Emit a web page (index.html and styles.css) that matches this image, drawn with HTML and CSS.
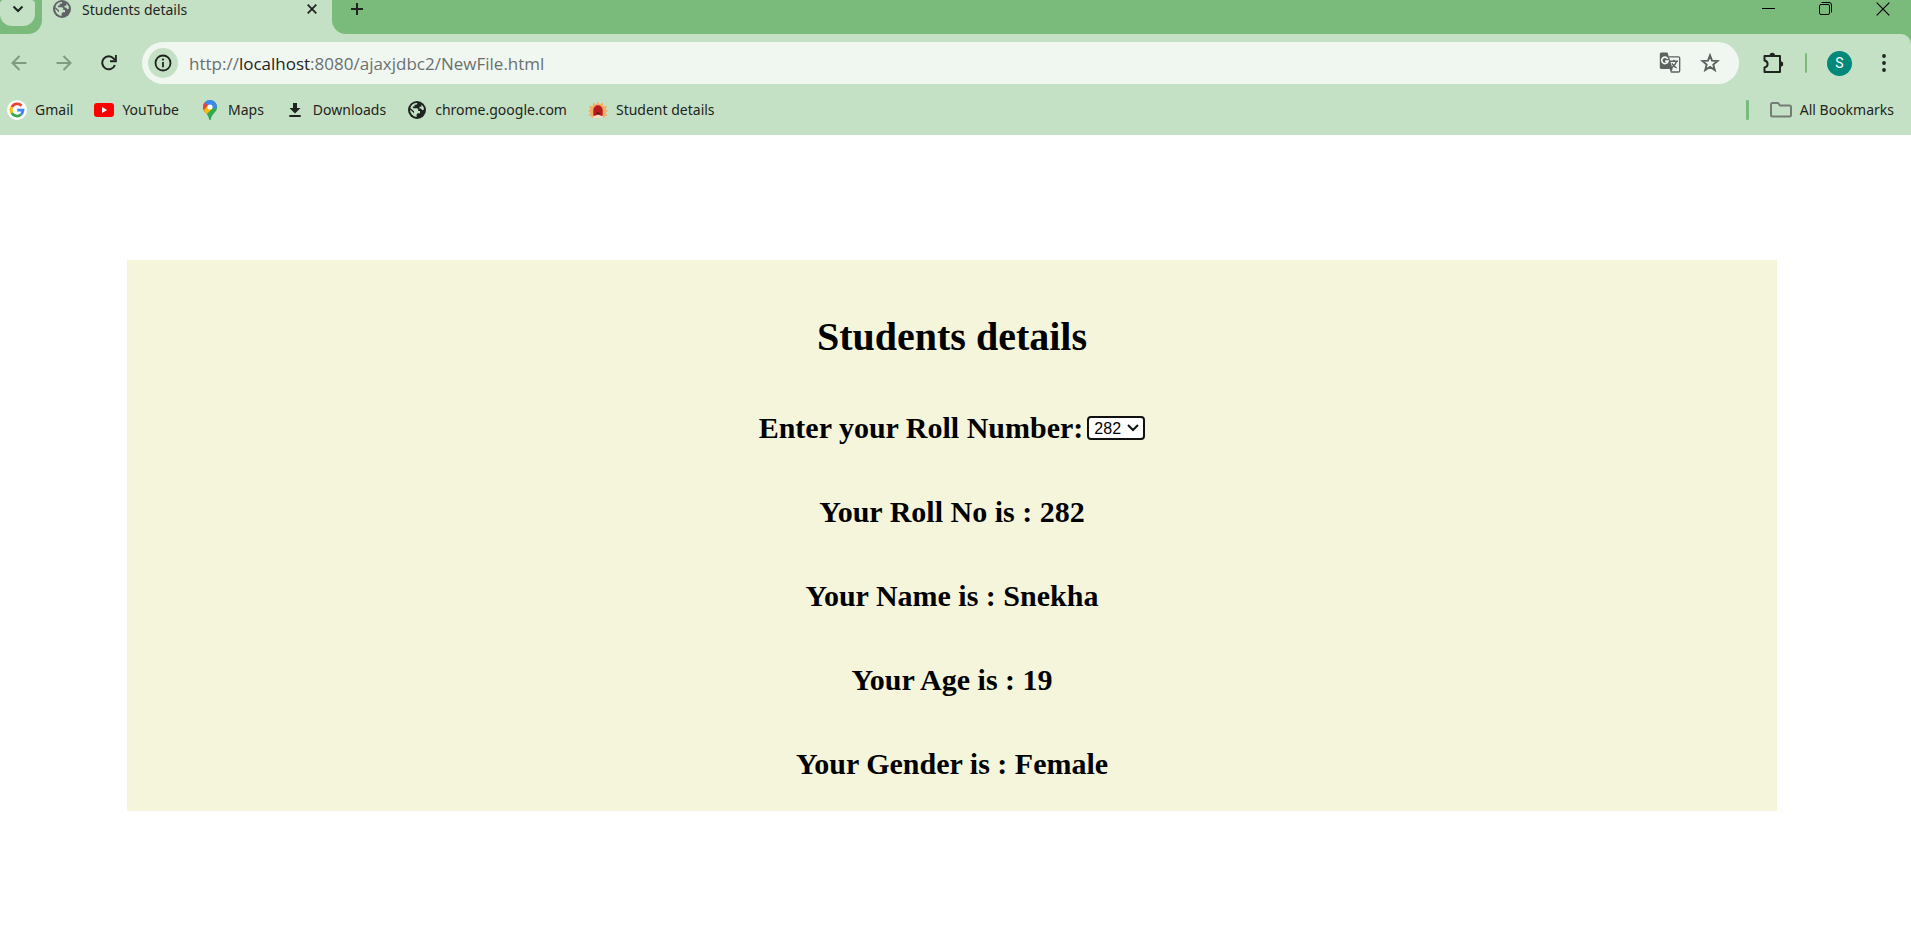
FILE: index.html
```html
<!DOCTYPE html>
<html lang="en">
<head>
<meta charset="utf-8">
<title>Students details</title>
<link rel="stylesheet" href="styles.css">
</head>
<body>
<svg class="defs" aria-hidden="true">
  <symbol id="globe" viewBox="0 0 18 18">
    <circle cx="9" cy="9" r="9" fill="currentColor"/>
    <path class="cut" d="M9.500 2.100 8.500 3.800H6.600V5.600H4.900V7.200H9.200L10.200 8.200V10H12V12.200H9.800L8.600 13.500V15.900A7 7 0 0 1 2.100 8.500L6 12.300V10.300L2.300 6.900A7 7 0 0 1 9.500 2.100Z"/>
    <path class="cut" d="M13.400 3.600A7 7 0 0 1 16 8.400L14.500 9.200 12.800 7.600H11.500V5.800H13.400Z"/>
  </symbol>
</svg>
<header class="browser">
  <div class="tabstrip">
    <div class="strip-start">
      <button class="tab-search" aria-label="Search tabs"><svg width="12" height="8" viewBox="0 0 12 8"><path d="M1.500 1.500 6 6l4.500-4.500" fill="none" stroke="currentColor" stroke-width="2"/></svg></button>
    </div>
    <div class="tab">
      <svg class="tab-icon" width="18" height="18"><use href="#globe"/></svg>
      <span class="tab-title">Students details</span>
      <button class="icon-button" aria-label="Close tab"><svg width="10" height="10" viewBox="0 0 10 10"><path d="M.7.7 9.300 9.300M9.300.7.7 9.300" stroke="currentColor" stroke-width="1.800"/></svg></button>
    </div>
    <div class="strip-end">
      <button class="icon-button" aria-label="New tab"><svg width="14" height="14" viewBox="0 0 14 14"><path d="M7 1v12M1 7h12" stroke="currentColor" stroke-width="2"/></svg></button>
      <div class="window-controls">
        <button class="icon-button" aria-label="Minimize"><svg width="14" height="14" viewBox="0 0 14 14"><path d="M0 6.500h13" stroke="#000"/></svg></button>
        <button class="icon-button" aria-label="Restore"><svg width="14" height="14" viewBox="0 0 14 14"><rect x=".5" y="2.500" width="10" height="10" rx="1.500" fill="none" stroke="#000"/><path d="M2.500.5H10Q12.500.5 12.500 3V10.500" fill="none" stroke="#000"/></svg></button>
        <button class="icon-button" aria-label="Close"><svg width="14" height="14" viewBox="0 0 14 14"><path d="M.7.7 13.300 13.300M13.300.7.7 13.300" stroke="#000" stroke-width="1.200"/></svg></button>
      </div>
    </div>
  </div>
  <div class="chrome">
    <div class="toolbar">
      <div class="nav">
        <button class="icon-button dim" aria-label="Back"><svg width="16" height="16" viewBox="0 0 16 16"><path d="M15.500 8H2M8.500 1 1.500 8l7 7" fill="none" stroke="currentColor" stroke-width="2"/></svg></button>
        <button class="icon-button dim" aria-label="Forward"><svg width="16" height="16" viewBox="0 0 16 16"><path d="M.5 8H14M7.500 1l7 7-7 7" fill="none" stroke="currentColor" stroke-width="2"/></svg></button>
        <button class="icon-button" aria-label="Reload"><svg width="16" height="16" viewBox="0 0 16 16"><path d="M13.900 10A6.500 6.500 0 1 1 12.700 3.600L14 5" fill="none" stroke="currentColor" stroke-width="2"/><path d="M14.900 0v6.200H9" fill="none" stroke="currentColor" stroke-width="1.900"/></svg></button>
      </div>
      <div class="omnibox">
        <button class="site-info" aria-label="Site information"><svg width="18" height="18" viewBox="0 0 18 18"><circle cx="9" cy="9" r="7.500" fill="none" stroke="currentColor" stroke-width="1.800"/><path d="M9 8v5.200" stroke="currentColor" stroke-width="1.800"/><circle cx="9" cy="5.600" r="1.100" fill="currentColor"/></svg></button>
        <a class="url" href="#">http://<span class="host">localhost</span>:8080/ajaxjdbc2/NewFile.html</a>
        <button class="icon-button grey" aria-label="Translate"><svg width="22" height="22" viewBox="0 0 22 22"><path d="M10 4.800h9.500q1.200 0 1.200 1.200v12.800q0 1.200-1.200 1.200H12" fill="none" stroke="currentColor" stroke-width="1.300"/><path d="M2.200.5H8.500L13.700 17H2.200Q.8 17 .8 15.600V2Q.8.5 2.200.5Z" fill="currentColor"/><path d="M8.700 6.800A3.200 3.200 0 1 0 9 9.200H6.200" fill="none" stroke="#f2f8f2" stroke-width="1.700"/><path d="M11 9.300h8M15 7.800v1.500M17.700 9.300Q16.500 13 12.500 16M13 11.300q1.600 3 4.700 4.700" fill="none" stroke="currentColor" stroke-width="1.400"/><path d="M10.800 17h2.900l-2 3.500Z" fill="currentColor"/></svg></button>
        <button class="icon-button grey" aria-label="Bookmark this tab"><svg width="20" height="20" viewBox="0 0 20 20"><path d="M10 2.400 12 7.700 17.700 8 13.300 11.600 14.800 17 10 13.900 5.200 17 6.700 11.600 2.300 8 8 7.700Z" fill="none" stroke="currentColor" stroke-width="1.900"/></svg></button>
      </div>
      <div class="actions">
        <button class="icon-button" aria-label="Extensions"><svg width="22" height="22" viewBox="0 0 22 22"><path d="M2.500 4H18V20H2.500V15.500Q5.600 14.800 5.600 12T2.500 8.500Z" fill="none" stroke="currentColor" stroke-width="2" stroke-linejoin="round"/><path d="M7.600 3.500a2.700 2.700 0 0 1 5.400 0ZM18.500 9.200a2.600 2.600 0 0 1 0 5.400Z" fill="currentColor"/></svg></button>
        <span class="divider"></span>
        <button class="avatar" aria-label="Profile S">S</button>
        <button class="icon-button" aria-label="Menu"><svg width="4" height="18" viewBox="0 0 4 18"><g fill="currentColor"><circle cx="2" cy="2" r="1.900"/><circle cx="2" cy="9" r="1.900"/><circle cx="2" cy="16" r="1.900"/></g></svg></button>
      </div>
    </div>
    <nav class="bookmarks" aria-label="Bookmarks">
      <a class="bookmark" href="#"><svg width="20" height="20" viewBox="0 0 20 20"><circle cx="10" cy="10" r="10" fill="#fff"/><g fill="none" stroke-width="2.800"><path d="M14.500 5.800A6 6 0 0 0 4.800 7.200" stroke="#ea4335"/><path d="M4.800 7.200a6 6 0 0 0 0 5.800" stroke="#fbbc05"/><path d="M4.800 13a6 6 0 0 0 9.200 1.500" stroke="#34a853"/><path d="M14 14.500A6 6 0 0 0 16 10.200H10.300" stroke="#4285f4"/></g></svg>Gmail</a>
      <a class="bookmark" href="#"><svg width="20" height="20" viewBox="0 0 20 20"><rect y="3" width="20" height="14" rx="3" fill="#f00"/><path d="M8 7v6l5.200-3Z" fill="#fff"/></svg>YouTube</a>
      <a class="bookmark" href="#"><svg width="20" height="20" viewBox="0 0 20 20"><clipPath id="pin"><path d="M10 0a7 7 0 0 1 7 7c0 5-5.300 6-6.200 12.200q-.8 1.200-1.600 0C8.300 13 3 12 3 7a7 7 0 0 1 7-7Z"/></clipPath><g clip-path="url(#pin)"><path d="M0 0h20v20H0Z" fill="#34a853"/><path d="M2 15 17 0H0v12Z" fill="#4285f4"/><path d="M4.500 2.500 10 7 3 15 0 9Z" fill="#ea4335"/><path d="M2 12 7.700 5.800 12 9 5.500 16Z" fill="#fbbc04"/><path d="M12 9 18 2V20H6V15Z" fill="#34a853"/><path d="M12 5.500 15.200 2 18 7 13 9Z" fill="#4285f4"/></g><circle cx="10" cy="7" r="2.600" fill="#fff"/></svg>Maps</a>
      <a class="bookmark" href="#"><svg width="20" height="20" viewBox="0 0 20 20"><path d="M8 3h4v5h3.500L10 13.500 4.500 8H8ZM4.300 15h11.400v2H4.300Z" fill="currentColor"/></svg>Downloads</a>
      <a class="bookmark" href="#"><svg width="20" height="20" viewBox="0 0 20 20"><use href="#globe" x="1" y="1" width="18" height="18"/></svg>chrome.google.com</a>
      <a class="bookmark" href="#"><svg width="20" height="20" viewBox="0 0 20 20"><path d="m10 1.500 1.500 3 3.500-2 .2 3.700 3.900-.5-1.600 3.500 2.500 1.700-2.500 1.600 2 3.500-3-.3V18H3.500v-2.300l-3 .3 2-3.500L0 10.900l2.500-1.700L.9 5.700l3.900.5.200-3.700 3.500 2Z" fill="#f2ad69"/><path d="M5.300 15.500V10a4.700 4.700 0 0 1 9.400 0V15.500l-2.700 1H8Z" fill="#b71c1c"/><path d="M8.800 16.500v-3a1.200 1.200 0 0 1 2.400 0V16.500Z" fill="#521510"/><path d="M5 16.500 10 14.500l5 2V18H5Z" fill="#f4d9c5"/></svg>Student details</a>
      <span class="divider thick"></span>
      <a class="bookmark" href="#"><svg width="22" height="20" viewBox="0 0 22 20"><path d="M1 4.500q0-1.500 1.500-1.500H8l2 2.500h9.500q1.500 0 1.500 1.500v8q0 1.500-1.500 1.500h-17q-1.500 0-1.500-1.500Z" fill="none" stroke="#747c76" stroke-width="2"/></svg>All Bookmarks</a>
    </nav>
  </div>
</header>
<main class="page">
  <section class="card">
    <h1>Students details</h1>
    <form class="field"><label for="roll">Enter your Roll Number:</label>
      <select id="roll"><option>282</option></select></form>
    <h2>Your Roll No is : 282</h2>
    <h2>Your Name is : Snekha</h2>
    <h2>Your Age is : 19</h2>
    <h2>Your Gender is : Female</h2>
  </section>
</main>
</body>
</html>
```
FILE: styles.css
```css
* { box-sizing: border-box; }
body {
  margin: 0;
  background: #fff;
  color: #000;
  font-family: "Liberation Serif", "Times New Roman", serif;
}
.defs { position: absolute; width: 0; height: 0; }
.cut { fill: #c5e1c5; }
svg { flex: none; display: block; }

.browser {
  background: #7aba7b;
  color: #1f2421;
  font-family: "Noto Sans", "Open Sans", sans-serif;
  font-size: 14px;
}
button {
  border: 0;
  padding: 0;
  background: none;
  color: inherit;
  font: inherit;
}
.icon-button {
  display: grid;
  place-items: center;
  width: 24px;
  height: 24px;
  flex: none;
}
.dim { color: #7f9a80; }
.grey { color: #5c625f; }

.tabstrip { display: flex; height: 34px; background: #c5e1c5; }
.strip-start { width: 42px; background: #7aba7b; border-radius: 0 0 14px 0; }
.tab-search {
  display: grid;
  place-items: center;
  width: 35px;
  height: 26px;
  padding-bottom: 8px;
  border-radius: 4px 4px 12px 12px;
  background: #c5e1c5;
}
.tab, .strip-end { display: flex; align-items: center; padding-bottom: 16px; }
.tab { width: 290px; padding-left: 11px; padding-right: 8px; }
.tab-icon { color: #5f6368; }
.tab-title { flex: 1; margin-left: 11px; }
.strip-end {
  flex: 1;
  justify-content: space-between;
  padding-left: 13px;
  padding-right: 16px;
  background: #7aba7b;
  border-radius: 0 0 0 14px;
}
.window-controls { display: flex; gap: 33px; }

.chrome { background: #c5e1c5; border-radius: 0 10px 0 0; }
.toolbar { display: flex; align-items: center; padding-top: 8px; }
.nav { display: flex; gap: 21px; padding: 0 21px 0 7px; }
.omnibox {
  flex: 1;
  display: flex;
  align-items: center;
  gap: 16px;
  height: 42px;
  padding: 0 17px 0 6px;
  border-radius: 21px;
  background: #f0f7f1;
}
.site-info {
  display: grid;
  place-items: center;
  width: 30px;
  height: 30px;
  border-radius: 50%;
  background: #c5e1c5;
}
.url {
  flex: 1;
  margin-left: -5px;
  color: #6b706d;
  font-family: "Open Sans", "Noto Sans", sans-serif;
  font-size: 17px;
  text-decoration: none;
}
.host { color: #1f2421; }
.actions { display: flex; align-items: center; gap: 20px; padding: 0 15px 0 22px; }
.divider { width: 2px; height: 20px; border-radius: 1px; background: #7aba7b; }
.avatar {
  width: 25px;
  height: 25px;
  border-radius: 50%;
  background: #00897b;
  color: #fff;
  font-family: Roboto, sans-serif;
  font-size: 14px;
}

.bookmarks {
  display: flex;
  align-items: center;
  gap: 21px;
  height: 51px;
  padding: 0 17px 0 7px;
}
.bookmark {
  display: flex;
  align-items: center;
  gap: 8px;
  color: inherit;
  text-decoration: none;
  white-space: nowrap;
}
.thick { width: 3px; margin-left: auto; }

.page { padding: 125px 134px 0 127px; }
.card {
  padding: 54px 0 30px;
  background: beige;
  text-align: center;
  font-weight: bold;
}
h1 { margin: 0 0 51px; font-size: 40px; line-height: 46px; }
h2, .field { margin: 0; font-size: 30px; line-height: 34px; }
h2 { margin-top: 50px; }
.field {
  display: flex;
  align-items: center;
  justify-content: center;
  gap: 4px;
}
.field select {
  appearance: none;
  width: 58px;
  height: 24px;
  padding: 0 0 0 5px;
  border: 2px solid #101010;
  border-radius: 4px;
  background: #fff url("data:image/svg+xml,%3Csvg xmlns='http://www.w3.org/2000/svg' viewBox='0 0 12 8'%3E%3Cpath d='M1 1l5 5 5-5' fill='none' stroke='%23101010' stroke-width='2'/%3E%3C/svg%3E") no-repeat right 4px center / 12px 8px;
  color: #000;
  font: 16px "Liberation Sans", Arial, sans-serif;
}
```
